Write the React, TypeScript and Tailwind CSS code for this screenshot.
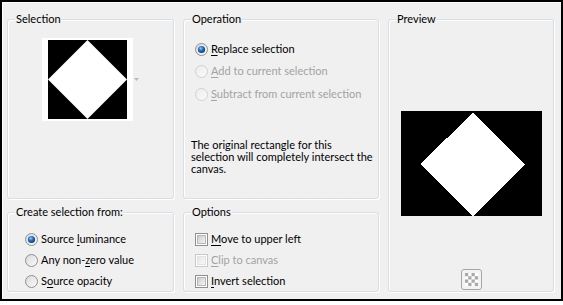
import React from "react";

type GroupProps = {
  title: string;
  className?: string;
  children?: React.ReactNode;
};

const Group: React.FC<GroupProps> = ({ title, className, children }) => {
  return (
    <fieldset
      className={`border border-[#d5dfe5] rounded-[3px] shadow-[inset_1px_1px_0_#fff,1px_1px_0_#fff] ${className ?? ""}`}>
      <legend className="ml-[7px] px-[1px] leading-[16px] bg-[#f0f0f0]">
        {title}
      </legend>
      {children}
    </fieldset>
  );
};

const Radio = ({ checked, disabled }: { checked?: boolean; disabled?: boolean }) => (
  <svg width="13" height="13" viewBox="0 0 13 13" className="shrink-0">
    <defs>
      <linearGradient id="radio-fill" x1="0" y1="0" x2="1" y2="1">
        <stop offset="0" stopColor="#d9d9d9" />
        <stop offset="1" stopColor="#fbfbfb" />
      </linearGradient>
      <linearGradient id="radio-fill-off" x1="0" y1="0" x2="1" y2="1">
        <stop offset="0" stopColor="#ececec" />
        <stop offset="1" stopColor="#fafafa" />
      </linearGradient>
      <radialGradient id="radio-dot" cx="0.4" cy="0.35" r="0.7">
        <stop offset="0" stopColor="#8fd0f7" />
        <stop offset="0.45" stopColor="#2a6fc0" />
        <stop offset="1" stopColor="#0c3470" />
      </radialGradient>
    </defs>
    <circle
      cx="6.5"
      cy="6.5"
      r="6"
      fill={disabled ? "url(#radio-fill-off)" : "url(#radio-fill)"}
      stroke={disabled ? "#d0d0d0" : "#8f9090"}
    />
    {checked && <circle cx="6.5" cy="6.5" r="3.6" fill="url(#radio-dot)" />}
  </svg>
);

const Checkbox = ({ disabled }: { disabled?: boolean }) => (
  <svg width="13" height="13" viewBox="0 0 13 13" className="shrink-0">
    <defs>
      <linearGradient id="check-fill" x1="0" y1="0" x2="1" y2="1">
        <stop offset="0" stopColor="#c8c9ca" />
        <stop offset="1" stopColor="#f7f7f7" />
      </linearGradient>
      <linearGradient id="check-fill-off" x1="0" y1="0" x2="1" y2="1">
        <stop offset="0" stopColor="#e6e6e6" />
        <stop offset="1" stopColor="#f9f9f9" />
      </linearGradient>
    </defs>
    <rect
      x="0.5"
      y="0.5"
      width="12"
      height="12"
      fill="#fff"
      stroke={disabled ? "#c9c9c9" : "#8f8f8f"}
    />
    <rect
      x="2.5"
      y="2.5"
      width="8"
      height="8"
      fill={disabled ? "url(#check-fill-off)" : "url(#check-fill)"}
      stroke={disabled ? "#e2e2e2" : "#b5b8bb"}
    />
  </svg>
);

const u = (c: string) => <span className="underline underline-offset-[2px]">{c}</span>;

export default function App() {
  return (
    <div className="w-[563px] h-[305px] bg-white">
      <div className="w-[563px] h-[301px] border-2 border-black bg-[#f0f0f0] font-['Segoe_UI','Lato',sans-serif] text-[11px] text-black">
        <div className="flex h-full border-t border-l border-white pl-[4px] pt-[8px] gap-[9px]">
          {/* left column */}
          <div className="flex flex-col w-[167px] gap-[5px]">
            <Group title="Selection" className="h-[188px]">
              <div className="flex items-center mt-[11px] ml-[34px]">
                <div className="bg-white px-[6px] py-[2px]">
                  <svg width="79" height="79" viewBox="0 0 79 79" className="block">
                    <rect width="79" height="79" fill="#000" />
                    <polygon points="39.5,0 79,39.5 39.5,79 0,39.5" fill="#fff" />
                  </svg>
                </div>
                <svg width="5" height="3" viewBox="0 0 5 3" className="ml-[1px]">
                  <path d="M0 0H5L2.5 3Z" fill="#b8b8b8" />
                </svg>
              </div>
            </Group>
            <Group title="Create selection from:" className="h-[88px]">
              <div className="flex flex-col mt-[9px] ml-[17px]">
                <div className="flex items-center gap-[3px] h-[21px]">
                  <Radio checked />
                  <span>Source {u("l")}uminance</span>
                </div>
                <div className="flex items-center gap-[3px] h-[21px]">
                  <Radio />
                  <span>Any non-{u("z")}ero value</span>
                </div>
                <div className="flex items-center gap-[3px] h-[21px]">
                  <Radio />
                  <span>S{u("o")}urce opacity</span>
                </div>
              </div>
            </Group>
          </div>

          {/* middle column */}
          <div className="flex flex-col w-[196px] gap-[5px]">
            <Group title="Operation" className="h-[188px]">
              <div className="flex flex-col mt-[11px] ml-[11px] gap-[0.5px]">
                <div className="flex items-center gap-[3px] h-[22px]">
                  <Radio checked />
                  <span>{u("R")}eplace selection</span>
                </div>
                <div className="flex items-center gap-[3px] h-[22px] text-[#a3a3a3]">
                  <Radio disabled />
                  <span>{u("A")}dd to current selection</span>
                </div>
                <div className="flex items-center gap-[3px] h-[22px] text-[#a3a3a3]">
                  <Radio disabled />
                  <span>{u("S")}ubtract from current selection</span>
                </div>
              </div>
              <p className="mt-[34px] ml-[7px] leading-[12px] whitespace-nowrap">
                The original rectangle for this
                <br />
                selection will completely intersect the
                <br />
                canvas.
              </p>
            </Group>
            <Group title="Options" className="h-[88px]">
              <div className="flex flex-col mt-[9px] ml-[11px]">
                <div className="flex items-center gap-[3px] h-[21px]">
                  <Checkbox />
                  <span>{u("M")}ove to upper left</span>
                </div>
                <div className="flex items-center gap-[3px] h-[21px] text-[#a3a3a3]">
                  <Checkbox disabled />
                  <span>{u("C")}lip to canvas</span>
                </div>
                <div className="flex items-center gap-[3px] h-[21px]">
                  <Checkbox />
                  <span>{u("I")}nvert selection</span>
                </div>
              </div>
            </Group>
          </div>

          {/* right column */}
          <div className="flex flex-col w-[166px]">
            <Group title="Preview" className="h-[281px]">
              <div className="flex flex-col items-center">
                <svg width="141" height="105" viewBox="0 0 141 105" className="block mt-[84px]">
                  <rect width="141" height="105" fill="#000" />
                  <polygon
                    points="72,2 124,53 72,105 19,53"
                    fill="#fff"
                    shapeRendering="crispEdges"
                  />
                </svg>
                <button className="mt-[53px] w-[21px] h-[21px] rounded-[3px] border border-[#a5a5a5] bg-[#f3f3f3] flex items-center justify-center">
                  <svg width="13" height="13" viewBox="0 0 12 12">
                    <rect width="12" height="12" fill="#fff" />
                    <rect x="0" y="0" width="3" height="3" fill="#a9a9a9" />
                    <rect x="6" y="0" width="3" height="3" fill="#a9a9a9" />
                    <rect x="3" y="3" width="3" height="3" fill="#a9a9a9" />
                    <rect x="9" y="3" width="3" height="3" fill="#a9a9a9" />
                    <rect x="0" y="6" width="3" height="3" fill="#a9a9a9" />
                    <rect x="6" y="6" width="3" height="3" fill="#a9a9a9" />
                    <rect x="3" y="9" width="3" height="3" fill="#a9a9a9" />
                    <rect x="9" y="9" width="3" height="3" fill="#a9a9a9" />
                  </svg>
                </button>
              </div>
            </Group>
          </div>
        </div>
      </div>
    </div>
  );
}
